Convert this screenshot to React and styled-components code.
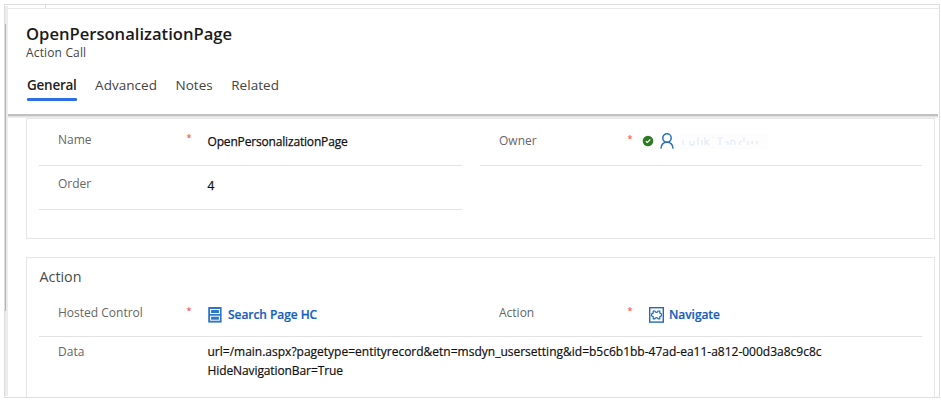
import React from "react";
import styled, { createGlobalStyle } from "styled-components";

const GlobalStyle = createGlobalStyle`
  * { box-sizing: border-box; }
  body {
    margin: 0;
    background: #fff;
    font-family: "Open Sans", "Noto Sans", sans-serif;
    font-size: 12px;
    line-height: 18px;
    overflow: hidden;
  }
  svg { display: block; flex: none; }
`;

const Frame = styled.div`
  width: 936px;
  height: 394px;
  margin: 4px 0 0 4px;
  border: 1px solid #dedede;
  display: grid;
  grid-template-columns: 3px 1fr;
  overflow: hidden;
`;

const ScrollTrack = styled.div`
  margin-top: 1px;
  height: 390px;
  background: #ececec;
`;

const ScrollThumb = styled.div`
  width: 1px;
  height: 287px;
  margin-top: 18px;
  background: #b4b4b4;
`;

const Main = styled.main`
  min-width: 0;
`;

const TopStrip = styled.div`
  height: 4px;
  padding-left: 37px;
  border-bottom: 1px solid #e9e9e9;
`;

const StripMark = styled.div`
  width: 1px;
  height: 3px;
  background: #dcdcdc;
`;

const Header = styled.header`
  height: 107px;
  width: 930px;
  padding: 14px 0 0 18px;
  border-bottom: 2px solid #c1c1c1;
  box-shadow: 0 1px 0 #e0e0e0, 0 2px 0 #eeeeee;
`;

const Title = styled.h1`
  margin: 0;
  font-size: 16.6px;
  line-height: 22px;
  font-weight: 600;
  color: #1b1b1b;
`;

const Subtitle = styled.div`
  line-height: 16px;
  letter-spacing: 0.15px;
  color: #444;
`;

const Tabs = styled.nav`
  display: flex;
  gap: 18.5px;
  margin: 13px 0 0 1px;
`;

const Tab = styled.a`
  height: 26px;
  padding-top: 2px;
  font-size: 13.5px;
  letter-spacing: ${(p) => (p.$active ? "-0.25px" : "0.03px")};
  font-weight: ${(p) => (p.$active ? 600 : 400)};
  color: ${(p) => (p.$active ? "#222" : "#444")};
`;

const Underline = styled.div`
  width: 49.5px;
  height: 2.6px;
  border-radius: 1px;
  margin-top: 4px;
  background: #2f6de6;
`;

const Card = styled.section`
  width: 909px;
  height: ${(p) => p.$height}px;
  margin: ${(p) => p.$gap}px 0 0 18px;
  padding-left: 12px;
  border: 1px solid #e6e6e6;
`;

const CardTitle = styled.h2`
  margin: 0;
  padding: 9px 0 0 0.5px;
  height: 35px;
  font-size: 14.3px;
  line-height: 20px;
  font-weight: 400;
  color: #4a4a4a;
`;

const Row = styled.div`
  display: grid;
  grid-template-columns: ${(p) => (p.$wide ? "883px" : "423px 442px")};
  column-gap: 18px;
  height: ${(p) => p.$height}px;
  border-bottom: ${(p) => (p.$ruled ? "1px solid #e2e2e2" : "none")};
  width: 883px;
`;

const Field = styled.div`
  display: grid;
  grid-template-columns: 128.5px 21px 1fr;
  align-items: start;
  padding-left: 19px;
  border-bottom: ${(p) => (p.$ruled ? "1px solid #e2e2e2" : "none")};
`;

const Label = styled.label`
  padding-top: ${(p) => p.$top}px;
  color: #666;
`;

const Required = styled.span`
  padding-top: ${(p) => p.$top}px;
  font-size: 9px;
  font-weight: 600;
  color: #f55;
`;

const Value = styled.div`
  display: flex;
  align-items: center;
  padding-top: ${(p) => p.$top}px;
  margin-left: ${(p) => p.$shift || 0}px;
  font-weight: 500;
  letter-spacing: ${(p) => p.$spacing || 0}px;
  color: #111;
  -webkit-text-stroke: 0.25px #111;
`;

const DataValue = styled.div`
  padding-top: 6px;
  line-height: 18.5px;
  font-weight: 500;
  color: #111;
  -webkit-text-stroke: 0.2px #111;
`;

const DataLine = styled.div`
  letter-spacing: ${(p) => p.$spacing || 0}px;
`;

const Link = styled.a`
  margin-left: ${(p) => p.$gap}px;
  font-weight: 600;
  letter-spacing: -0.06px;
  color: #1560bd;
  -webkit-text-stroke: 0.2px #1560bd;
`;

const StatusIcon = styled.svg`
  margin-right: 6px;
`;

const Redacted = styled.svg`
  margin-left: 6px;
`;

const ControlIcon = () => (
  <svg width="14" height="16" viewBox="0 0 14 16">
    <rect x="0.2" y="0" width="13.4" height="15.6" fill="#2f76c8" />
    <g fill="none" stroke="#fff" strokeWidth="1">
      <rect x="2.6" y="2.5" width="8.8" height="4" />
      <rect x="2.6" y="9.2" width="8.800" height="4" />
    </g>
  </svg>
);

const PuzzleIcon = () => (
  <svg width="15" height="16" viewBox="0 0 15 16" fill="none" stroke="#2268be">
    <rect x="0.700" y="0.700" width="13.600" height="14.400" strokeWidth="1.400" />
    <path
      strokeWidth="1.200"
      strokeLinejoin="round"
      d="M4.200 4h1.800c0 1.700 3 1.700 3 0h1.800v2.200c2.300 0 2.300 3.400 0 3.400v2.200H9c0-1.700-3-1.700-3 0H4.200V9.600c-2.300 0-2.300-3.400 0-3.400z"
    />
  </svg>
);

const OwnerStatus = () => (
  <StatusIcon width="12" height="12" viewBox="0 0 12 12">
    <circle cx="6" cy="6" r="5.3" fill="#2d7a22" />
    <path d="M3.800 6.200l1.500 1.300 3-3" fill="none" stroke="#fff" strokeWidth="1.200" />
  </StatusIcon>
);

const PersonIcon = () => (
  <svg width="14" height="16" viewBox="0 0 14 16" fill="none" stroke="#2a6fc4" strokeWidth="1.500">
    <circle cx="7" cy="5" r="4.200" />
    <path d="M0.900 15.600c.3-3.800 2.700-6.400 6.100-6.400s5.800 2.600 6.100 6.400" />
  </svg>
);

const RedactedName = () => (
  <Redacted width="88" height="16" viewBox="0 0 88 16" fill="none" stroke="#e3eaf3">
    <rect width="88" height="16" fill="#fdfdfe" stroke="none" />
    <path strokeWidth="1.200" d="M3 7v5M10 8v3q2 2 4 0V8M18 4v8M22 7v5M25 4v8M29 7l-3 2 3 3M33 4v1" />
    <path strokeWidth="1.200" d="M37 5h6M40 6v6M45 9h3v3M51 12V8q3-2 4 1v3M62 8q-4 1-2 4M64 4v5M68 12V8M73 8q-3 2 0 3M77 11V8" />
  </Redacted>
);

export default function App() {
  return (
    <>
      <GlobalStyle />
      <Frame>
        <ScrollTrack>
          <ScrollThumb />
        </ScrollTrack>
        <Main>
          <TopStrip>
            <StripMark />
          </TopStrip>
          <Header>
            <Title>OpenPersonalizationPage</Title>
            <Subtitle>Action Call</Subtitle>
            <Tabs>
              <Tab $active>
                General
                <Underline />
              </Tab>
              <Tab>Advanced</Tab>
              <Tab>Notes</Tab>
              <Tab>Related</Tab>
            </Tabs>
          </Header>

          <Card $height={121} $gap={2}>
            <Row $height={47}>
              <Field $ruled>
                <Label $top={12}>Name</Label>
                <Required $top={10}>*</Required>
                <Value $top={14} $spacing={-0.17}>OpenPersonalizationPage</Value>
              </Field>
              <Field $ruled>
                <Label $top={13}>Owner</Label>
                <Required $top={11}>*</Required>
                <Value $top={14} $shift={-6.5}>
                  <OwnerStatus />
                  <PersonIcon />
                  <RedactedName />
                </Value>
              </Field>
            </Row>
            <Row $height={44}>
              <Field $ruled>
                <Label $top={9}>Order</Label>
                <span />
                <Value $top={11}>4</Value>
              </Field>
            </Row>
          </Card>

          <Card $height={160} $gap={18}>
            <CardTitle>Action</CardTitle>
            <Row $height={44} $ruled>
              <Field>
                <Label $top={11}>Hosted Control</Label>
                <Required $top={9}>*</Required>
                <Value $top={13}>
                  <ControlIcon />
                  <Link $gap={6.5}>Search Page HC</Link>
                </Value>
              </Field>
              <Field>
                <Label $top={11}>Action</Label>
                <Required $top={9}>*</Required>
                <Value $top={13}>
                  <PuzzleIcon />
                  <Link $gap={5.5}>Navigate</Link>
                </Value>
              </Field>
            </Row>
            <Row $height={70} $wide>
              <Field>
                <Label $top={6}>Data</Label>
                <span />
                <DataValue>
                  <DataLine>
                    url=/main.aspx?pagetype=entityrecord&amp;etn=msdyn_usersetting&amp;id=b5c6b1bb-47ad-ea11-a812-000d3a8c9c8c
                  </DataLine>
                  <DataLine $spacing={-0.1}>HideNavigationBar=True</DataLine>
                </DataValue>
              </Field>
            </Row>
          </Card>
        </Main>
      </Frame>
    </>
  );
}
